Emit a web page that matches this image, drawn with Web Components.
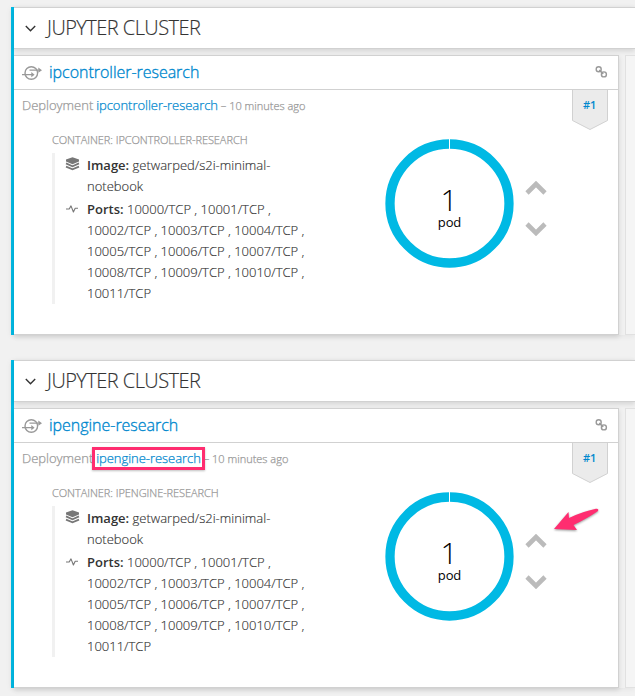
<!DOCTYPE html>
<html lang="en">
<head>
<meta charset="utf-8">
<title>Jupyter cluster</title>
<style>
html,body{margin:0;height:696px;overflow:hidden;background:#f1f1f1}
body{font:300 13px/21px "Open Sans",sans-serif;color:#333;-webkit-text-stroke-width:.15px}
main{display:flex;flex-direction:column;gap:25px;padding:7px 0 0 11px}
</style>
</head>
<body>
<main>
<service-group heading="JUPYTER CLUSTER">
  <deployment-card name="ipcontroller-research"></deployment-card>
</service-group>
<service-group heading="JUPYTER CLUSTER">
  <deployment-card name="ipengine-research" marked></deployment-card>
</service-group>
</main>
<script>
class ServiceGroup extends HTMLElement{
  constructor(){
    super();
    this.attachShadow({mode:'open'}).innerHTML=`<style>
:host{display:flex;flex-direction:column;height:328px;box-sizing:border-box;border-left:3px solid #00b9e4;box-shadow:0 1px 6px rgba(0,0,0,.06)}
header{display:flex;align-items:center;flex:none;box-sizing:border-box;height:42px;background:#fff;border:solid #d1d1d1;border-width:1px 0;padding-left:11px;box-shadow:0 2px 5px rgba(0,0,0,.12)}
svg{display:block;width:11px;height:7px;margin-right:11px}
h2{margin:0;font-weight:300;font-size:20px;line-height:30px;letter-spacing:-.55px;white-space:nowrap;color:#333}
.row{display:flex;gap:6px;padding-top:6px;flex:1;min-height:0}
.next{flex:1;border:1px solid #e1e1e1;border-right:0;background:#f5f5f5}
</style>
<header><svg viewBox="0 0 11 7"><path d="M.8 1 5.5 5.7 10.2 1" fill="none" stroke="#333" stroke-width="1.4"/></svg><h2></h2></header>
<div class="row"><slot></slot><div class="next"></div></div>`;
    this.shadowRoot.querySelector('h2').textContent=this.getAttribute('heading');
  }
}
class RevisionBadge extends HTMLElement{
  constructor(){
    super();
    this.attachShadow({mode:'open'}).innerHTML=`<style>
:host{display:grid;width:36px;height:40px;-webkit-text-stroke-width:0}
svg,span{grid-area:1/1}
span{z-index:1;text-align:center;font:600 11px/30px "Open Sans",sans-serif;letter-spacing:-.2px;color:#0088ce;padding-right:1px}
</style><svg width="36" height="40"><path d="M.5-.5V30.5L18 39.5 35.5 30.5V-.5" fill="#ebebeb" stroke="#d1d1d1"/></svg><span><slot></slot></span>`;
  }
}
class PodDonut extends HTMLElement{
  constructor(){
    super();
    this.attachShadow({mode:'open'}).innerHTML=`<style>
:host{display:grid;width:130px;height:130px;color:#000;-webkit-text-stroke-width:0}
svg,.label{grid-area:1/1}
.label{z-index:1;display:flex;flex-direction:column;align-items:center;padding-top:46px}
b{font-weight:300;font-size:30px;line-height:32px}
span{font-weight:400;font-size:13px;line-height:12px;letter-spacing:-.1px;padding-left:1px}
</style><svg width="130" height="130"><circle cx="65.5" cy="65.5" r="59.5" fill="none" stroke="#00b9e4" stroke-width="9.3"/><path d="M65.5 0v11" stroke="#fff" stroke-width="1"/></svg>
<div class="label"><b>1</b><span>pod</span></div>`;
  }
}
class PodScaler extends HTMLElement{
  constructor(){
    super();
    this.attachShadow({mode:'open'}).innerHTML=`<style>
:host{display:flex;flex-direction:column;gap:27px}svg{display:block}
</style><svg width="22" height="14"><path d="M2 12 11 3 20 12" fill="none" stroke="#bbb" stroke-width="4.6"/></svg>
<svg width="22" height="14"><path d="M2 2 11 11 20 2" fill="none" stroke="#bbb" stroke-width="4.6"/></svg>`;
  }
}
class DeploymentCard extends HTMLElement{
  constructor(){
    super();
    const n=this.getAttribute('name');
    this.attachShadow({mode:'open'}).innerHTML=`<style>
:host{display:flex;flex-direction:column;position:relative;flex:none;width:605px;box-sizing:border-box;background:#fff;border:solid #d1d1d1;border-width:1px 1px 1px 0;box-shadow:0 2px 5px rgba(0,0,0,.12)}
.title{display:flex;align-items:center;flex:none;box-sizing:border-box;height:34px;border-bottom:1px solid #d1d1d1;padding:0 10px 0 8px}
.title a{font-size:16px;line-height:24px;margin:-2px 0 0 7px;flex:1;white-space:nowrap;-webkit-text-stroke-width:.35px;letter-spacing:-.03px}
a{color:#0088ce}
svg{display:block;flex:none}
.link{margin-top:-2px}
.sub{display:flex;height:40px;flex:none;padding:0 10px 0 8px;color:#999}
.sub p{margin:0;flex:1;line-height:31px;white-space:nowrap;-webkit-text-stroke-width:.25px}
.sub a{letter-spacing:-.04px;margin-left:-.5px}
small{font-size:11px}
.mark{position:absolute;left:78px;top:38px;width:107px;height:17px;border:3px solid #ff2d70;box-shadow:0 1px 2px rgba(0,0,0,.25)}
.arrow{position:absolute;left:537px;top:96px}
.body{display:flex;padding-left:38px}
.details{width:258px;flex:none}
h3{margin:0;font-weight:300;font-size:11px;line-height:20px;letter-spacing:-.06px;color:#999;white-space:nowrap;-webkit-text-stroke-width:.25px}
ul{margin:3px 0 0;padding:0 0 0 10px;list-style:none;border-left:3px solid #f1f1f1;display:flex;flex-direction:column}
li{display:flex;padding-top:2px}
.lines{display:flex;flex-direction:column;width:222px}
.lines div{display:flex;gap:3.4px;white-space:nowrap}
li svg{margin:2px 7px 0 0}
strong{font-weight:600;-webkit-text-stroke-width:0}
pod-donut{margin:8px 0 0 74px}
pod-scaler{margin:50.5px 0 0 11px}
</style>
<div class="title">
<svg width="20" height="16" fill="none" stroke="#999" stroke-width="1.4"><circle cx="9.3" cy="8" r="6.3"/><path d="M7.5 5.2h9M0 9.7h11" stroke-width="1.3"/><path d="M16.3 2.6 20 5.2 16.3 7.8zM9.3 7.1 12.6 9.7 9.3 12.3z" fill="#999" stroke="none"/></svg>
<a></a>
<svg class="link" width="14" height="14" fill="none" stroke="#999" stroke-width="1.4"><circle cx="4.7" cy="4.3" r="2.5"/><circle cx="9.9" cy="9.4" r="2.5"/><path d="M5.2 5 9.2 8.8" stroke-width="1.7"/></svg>
</div>
<div class="sub"><p>Deployment <a></a><small> – 10 minutes ago</small></p><revision-badge>#1</revision-badge></div>
<div class="body">
<div class="details"><h3></h3>
<ul>
<li><svg width="15" height="16"><path d="M7.5.2 14 2.4V4.6L7.5 7.3 1 4.6V2.4z" fill="#777"/><path d="M1 6.4 7.5 9.2 14 6.4M1 9.6 7.5 12.4 14 9.6" fill="none" stroke="#777" stroke-width="1.7"/></svg><div class="lines"><div><strong>Image:</strong><span>getwarped/s2i-minimal-</span></div><div>notebook</div></div></li>
<li><svg width="15" height="16"><path d="M1 8h3.2L6 4.9 8.4 11 10.2 7.3H13" fill="none" stroke="#777" stroke-width="1.1" stroke-linejoin="round"/></svg><div class="lines"><div><strong>Ports:</strong><span>10000/TCP , 10001/TCP ,</span></div><div>10002/TCP , 10003/TCP , 10004/TCP ,</div><div>10005/TCP , 10006/TCP , 10007/TCP ,</div><div>10008/TCP , 10009/TCP , 10010/TCP ,</div><div>10011/TCP</div></div></li>
</ul></div>
<pod-donut></pod-donut><pod-scaler></pod-scaler>
</div>
${this.hasAttribute('marked')?`<div class="mark"></div><svg class="arrow" width="54" height="30" style="filter:drop-shadow(0 1px 1px rgba(0,0,0,.4))"><path d="M3 24 17.5 7 18 13Q31 6.5 45 3.7Q48 3.5 47 6Q37 13 22.5 20L26 25z" fill="#ff2d70"/></svg>`:''}`;
    this.shadowRoot.querySelectorAll('a').forEach(a=>a.textContent=n);
    this.shadowRoot.querySelector('h3').textContent='CONTAINER: '+n.toUpperCase();
  }
}
customElements.define('revision-badge',RevisionBadge);
customElements.define('pod-donut',PodDonut);
customElements.define('pod-scaler',PodScaler);
customElements.define('deployment-card',DeploymentCard);
customElements.define('service-group',ServiceGroup);
</script>
</body>
</html>
